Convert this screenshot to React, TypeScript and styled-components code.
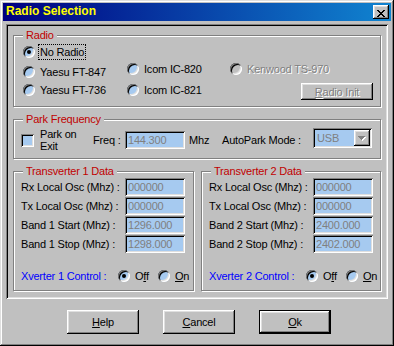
import React from "react";
import styled, { createGlobalStyle } from "styled-components";

const SUNKEN =
  "inset 1px 1px 0 #808080, inset -1px -1px 0 #ffffff, inset 2px 2px 0 #000000, inset -2px -2px 0 #dfdfdf";
const RAISED =
  "inset -1px -1px 0 #000000, inset 1px 1px 0 #ffffff, inset -2px -2px 0 #808080, inset 2px 2px 0 #dfdfdf";
const DEFAULT_BTN =
  "inset 0 0 0 1px #000000, inset -2px -2px 0 #000000, inset 2px 2px 0 #ffffff, inset -3px -3px 0 #808080, inset 3px 3px 0 #dfdfdf";

const GlobalStyle = createGlobalStyle`
  html, body {
    margin: 0;
    padding: 0;
    background: #c0c0c0;
  }
  body {
    font-family: "Liberation Sans", Arial, sans-serif;
    font-size: 11px;
    letter-spacing: -0.2px;
    color: #000;
  }
  *, *::before, *::after {
    box-sizing: border-box;
  }
`;

const Window = styled.div`
  width: 394px;
  height: 346px;
  padding: 3px;
  background: #c0c0c0;
  box-shadow: inset -1px -1px 0 #000000, inset 1px 1px 0 #dfdfdf,
    inset -2px -2px 0 #808080, inset 2px 2px 0 #ffffff;
  display: flex;
  flex-direction: column;
`;

const TitleBar = styled.div`
  flex: none;
  height: 18px;
  display: flex;
  align-items: flex-start;
  justify-content: space-between;
  padding: 0 2px 0 3px;
  background: linear-gradient(90deg, #000080, #1084d0);
`;

const TitleText = styled.span`
  color: #ffff00;
  font-weight: bold;
  font-size: 12px;
  line-height: 16px;
  letter-spacing: 0;
`;

const CloseButton = styled.button`
  width: 16px;
  height: 14px;
  margin-top: 2px;
  padding: 3px 0 0 4px;
  border: 0;
  background: #c0c0c0;
  box-shadow: ${RAISED};
  line-height: 0;

  svg {
    display: block;
  }
`;

const Panel = styled.div`
  flex: none;
  height: 275px;
  margin: 3px 3px 0;
  padding: 5px 7px 0 7px;
  box-shadow: ${SUNKEN};
  display: flex;
  flex-direction: column;
  gap: 6px;
`;

const Group = styled.fieldset<{ $width?: number }>`
  margin: 0;
  padding: 0;
  min-width: 0;
  border: 1px solid #808080;
  box-shadow: inset 1px 1px 0 #ffffff, 1px 1px 0 #ffffff;
  ${(p) => (p.$width ? `width: ${p.$width}px; flex: none;` : "")}
`;

const GroupTitle = styled.legend`
  margin-left: 9px;
  padding: 0 3px;
  line-height: 13px;
  color: #c00000;
  background: #c0c0c0;
`;

const RadioGrid = styled.div`
  display: grid;
  grid-template-columns: 104px 103px 71px 72px;
  grid-template-rows: 17px 21px 18px;
  align-items: start;
  padding: 2px 0 6px 9px;
`;

const Option = styled.label<{ $col?: number; $shift?: number }>`
  display: flex;
  align-items: center;
  height: 16px;
  white-space: nowrap;
  grid-column: ${(p) => p.$col ?? "auto"};
  margin-top: ${(p) => p.$shift ?? 0}px;
`;

const RadioDot = styled.span<{ $checked?: boolean; $disabled?: boolean }>`
  flex: none;
  width: 12px;
  height: 12px;
  border-radius: 50%;
  background: ${(p) => (p.$disabled ? "#c0c0c0" : "#a6caf0")};
  box-shadow: ${SUNKEN};
  display: flex;
  align-items: center;
  justify-content: center;

  &::after {
    content: "";
    width: 4px;
    height: 4px;
    border-radius: 50%;
    background: #000;
    visibility: ${(p) => (p.$checked ? "visible" : "hidden")};
  }
`;

const OptionText = styled.span<{ $focused?: boolean; $disabled?: boolean }>`
  margin-left: 3px;
  padding: 0 1px;
  line-height: 14px;
  border: 1px dotted ${(p) => (p.$focused ? "#000" : "transparent")};
  color: ${(p) => (p.$disabled ? "#808080" : "inherit")};
  text-shadow: ${(p) => (p.$disabled ? "1px 1px 0 #ffffff" : "none")};
`;

const PushButton = styled.button<{ $default?: boolean; $small?: boolean; $col?: number }>`
  width: 72px;
  height: ${(p) => (p.$small ? 17 : 24)}px;
  margin-top: ${(p) => (p.$small ? 1 : 0)}px;
  padding: ${(p) => (p.$small ? "1px 0 0" : "0")};
  grid-column: ${(p) => p.$col ?? "auto"};
  border: 0;
  background: #c0c0c0;
  box-shadow: ${(p) => (p.$default ? DEFAULT_BTN : RAISED)};
  font: inherit;
  letter-spacing: inherit;
  line-height: 13px;
  color: #000;

  &:disabled {
    color: #808080;
    text-shadow: 1px 1px 0 #ffffff;
  }
`;

const ParkRow = styled.div`
  display: grid;
  grid-template-columns: 13px 59px 32px 60px 37px 91px 59px;
  align-items: center;
  padding: 2px 0 6px 7px;
`;

const CheckBox = styled.span`
  width: 13px;
  height: 13px;
  background: #a6caf0;
  box-shadow: ${SUNKEN};
`;

const Caption = styled.span<{ $indent?: number; $lh?: number }>`
  padding-left: ${(p) => p.$indent ?? 0}px;
  line-height: ${(p) => p.$lh ?? 13}px;
  white-space: nowrap;
`;

const Edit = styled.input<{ $width?: number }>`
  width: ${(p) => p.$width ?? 60}px;
  height: 18px;
  padding: 0 3px;
  border: 0;
  outline: none;
  background: #a6caf0;
  color: #808080;
  font: inherit;
  letter-spacing: inherit;
  box-shadow: ${SUNKEN};
`;

const Combo = styled.div`
  align-self: start;
  width: 59px;
  height: 20px;
  padding: 2px 2px 2px 4px;
  display: flex;
  align-items: center;
  justify-content: space-between;
  background: #a6caf0;
  color: #808080;
  box-shadow: ${SUNKEN};
`;

const ComboButton = styled.span`
  width: 16px;
  height: 16px;
  background: #c0c0c0;
  box-shadow: ${RAISED};
  display: flex;
  align-items: center;
  justify-content: center;

  svg {
    display: block;
  }
`;

const XverterRow = styled.div`
  display: flex;
  gap: 7px;
`;

const DataGrid = styled.div`
  display: grid;
  grid-template-columns: 104px 60px;
  grid-auto-rows: 18px;
  row-gap: 1px;
  align-items: center;
  padding-left: 7px;
`;

const ControlRow = styled.div`
  display: grid;
  grid-template-columns: 97px 40px auto;
  align-items: center;
  height: 16px;
  margin: 15px 0 6px;
  padding-left: 7px;
`;

const ControlLabel = styled.span`
  color: #0000ff;
  line-height: 13px;
  white-space: nowrap;
`;

const ButtonRow = styled.div`
  display: flex;
  justify-content: center;
  gap: 24px;
  margin-top: 11px;
  padding-left: 4px;
`;

const CloseGlyph = () => (
  <svg width="8" height="7" viewBox="0 0 8 7" shapeRendering="crispEdges">
    <path
      fill="#000"
      d="M0 0h2v1H0zM6 0h2v1H6zM1 1h2v1H1zM5 1h2v1H5zM2 2h4v1H2zM3 3h2v1H3zM2 4h4v1H2zM1 5h2v1H1zM5 5h2v1H5zM0 6h2v1H0zM6 6h2v1H6z"
    />
  </svg>
);

const arrow = "M0 0h7v1H0zM1 1h5v1H1zM2 2h3v1H2zM3 3h1v1H3z";

const DownArrow = () => (
  <svg width="8" height="5" viewBox="0 0 8 5" shapeRendering="crispEdges">
    <path fill="#fff" transform="translate(1 1)" d={arrow} />
    <path fill="#808080" d={arrow} />
  </svg>
);

const transverters = [
  {
    n: 1,
    width: 181,
    rows: [
      ["Rx Local Osc (Mhz) :", "000000"],
      ["Tx Local Osc (Mhz) :", "000000"],
      ["Band 1 Start (Mhz) :", "1296.000"],
      ["Band 1 Stop (Mhz) :", "1298.000"],
    ],
  },
  {
    n: 2,
    width: 180,
    rows: [
      ["Rx Local Osc (Mhz) :", "000000"],
      ["Tx Local Osc (Mhz) :", "000000"],
      ["Band 2 Start (Mhz) :", "2400.000"],
      ["Band 2 Stop (Mhz) :", "2402.000"],
    ],
  },
];

export default function App() {
  return (
    <>
      <GlobalStyle />
      <Window>
        <TitleBar>
          <TitleText>Radio Selection</TitleText>
          <CloseButton aria-label="Close">
            <CloseGlyph />
          </CloseButton>
        </TitleBar>

        <Panel>
          <Group>
            <GroupTitle>Radio</GroupTitle>
            <RadioGrid>
              <Option>
                <RadioDot $checked />
                <OptionText $focused>No Radio</OptionText>
              </Option>
              <Option $col={1} $shift={3}>
                <RadioDot />
                <OptionText>Yaesu FT-847</OptionText>
              </Option>
              <Option>
                <RadioDot />
                <OptionText>Icom IC-820</OptionText>
              </Option>
              <Option>
                <RadioDot $disabled />
                <OptionText $disabled>Kenwood TS-970</OptionText>
              </Option>
              <Option $col={1}>
                <RadioDot />
                <OptionText>Yaesu FT-736</OptionText>
              </Option>
              <Option>
                <RadioDot />
                <OptionText>Icom IC-821</OptionText>
              </Option>
              <PushButton $small $col={4} disabled>
                <u>R</u>adio Init
              </PushButton>
            </RadioGrid>
          </Group>

          <Group>
            <GroupTitle>Park Frequency</GroupTitle>
            <ParkRow>
              <CheckBox />
              <Caption $indent={6} $lh={12}>
                Park on
                <br />
                Exit
              </Caption>
              <Caption>Freq :</Caption>
              <Edit readOnly value="144.300" />
              <Caption $indent={4}>Mhz</Caption>
              <Caption>AutoPark Mode :</Caption>
              <Combo>
                <span>USB</span>
                <ComboButton>
                  <DownArrow />
                </ComboButton>
              </Combo>
            </ParkRow>
          </Group>

          <XverterRow>
            {transverters.map((t) => (
              <Group key={t.n} $width={t.width}>
                <GroupTitle>Transverter {t.n} Data</GroupTitle>
                <DataGrid>
                  {t.rows.map(([label, value]) => (
                    <React.Fragment key={label}>
                      <Caption>{label}</Caption>
                      <Edit readOnly value={value} />
                    </React.Fragment>
                  ))}
                </DataGrid>
                <ControlRow>
                  <ControlLabel>Xverter {t.n} Control :</ControlLabel>
                  <Option>
                    <RadioDot $checked />
                    <OptionText>
                      O<u>f</u>f
                    </OptionText>
                  </Option>
                  <Option>
                    <RadioDot />
                    <OptionText>
                      <u>O</u>n
                    </OptionText>
                  </Option>
                </ControlRow>
              </Group>
            ))}
          </XverterRow>
        </Panel>

        <ButtonRow>
          <PushButton>
            <u>H</u>elp
          </PushButton>
          <PushButton>
            <u>C</u>ancel
          </PushButton>
          <PushButton $default>
            <u>O</u>k
          </PushButton>
        </ButtonRow>
      </Window>
    </>
  );
}
